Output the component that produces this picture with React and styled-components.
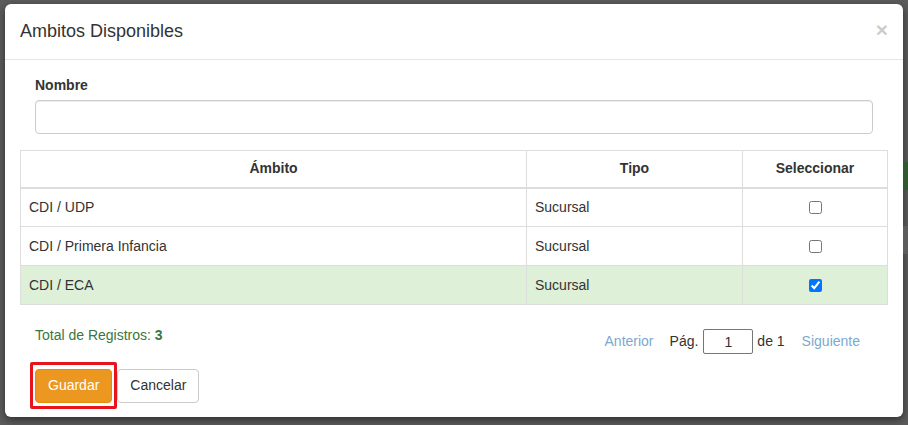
import React, { useState } from "react";
import styled, { createGlobalStyle } from "styled-components";

const GlobalStyle = createGlobalStyle`
  html, body {
    margin: 0;
    padding: 0;
    background: #5c5c5c;
    font-family: "Liberation Sans", Arial, sans-serif;
    font-size: 14px;
    line-height: 1.42857;
    color: #333;
  }
  * { box-sizing: border-box; }
`;

const Backdrop = styled.div`
  width: 908px;
  height: 425px;
  display: flex;
  align-items: flex-start;
  padding: 4px 0 0 5px;
  overflow: hidden;
`;

const PagePeek = styled.div`
  flex: 1;
  display: flex;
  flex-direction: column;
  padding-top: 158px;
`;

const PeekBar = styled.div`
  height: 28px;
  background: ${props => props.color};
  margin-bottom: ${props => props.gap}px;
`;

const Modal = styled.div`
  width: 898px;
  height: 413px;
  background: #fff;
  border-radius: 6px;
  box-shadow: 0 3px 9px rgba(0, 0, 0, 0.5);
  display: flex;
  flex-direction: column;
  flex-shrink: 0;
  overflow: hidden;
`;

const ModalHeader = styled.div`
  display: flex;
  align-items: center;
  justify-content: space-between;
  padding: 15px 15px 14px 15px;
  border-bottom: 1px solid #e5e5e5;
`;

const ModalTitle = styled.h4`
  margin: 0;
  font-size: 18px;
  font-weight: normal;
  line-height: 1.42857;
  color: #333;
`;

const CloseButton = styled.button`
  border: none;
  background: transparent;
  padding: 0;
  font-family: "Liberation Sans", Arial, sans-serif;
  font-size: 21px;
  font-weight: bold;
  line-height: 1;
  color: #000;
  opacity: 0.2;
  margin-top: -4px;
  cursor: pointer;
`;

const ModalBody = styled.div`
  padding: 15px;
`;

const FormGroup = styled.div`
  padding: 0 15px;
  margin-bottom: 16px;
  display: flex;
  flex-direction: column;
`;

const Label = styled.label`
  font-weight: bold;
  margin-bottom: 5px;
  padding-top: 1px;
`;

const TextInput = styled.input`
  height: 34px;
  border: 1px solid #ccc;
  border-radius: 4px;
  padding: 6px 12px;
  font-family: inherit;
  font-size: 14px;
  box-shadow: inset 0 1px 1px rgba(0, 0, 0, 0.075);
  outline: none;
  margin-top: -1px;
`;

const Table = styled.table`
  width: 100%;
  border-collapse: collapse;
  border: 1px solid #ddd;
  margin-bottom: 20px;
  table-layout: fixed;
`;

const Th = styled.th`
  width: ${props => props.width}px;
  padding: 8px;
  border: 1px solid #ddd;
  border-bottom: 2px solid #ddd;
  text-align: center;
  font-weight: bold;
  line-height: 1.42857;
  height: 37px;
`;

const Tr = styled.tr`
  background: ${props => (props.selected ? "#dff0d8" : "#fff")};
`;

const Td = styled.td`
  padding: 9px 8px 8px 8px;
  border: 1px solid #ddd;
  text-align: ${props => (props.center ? "center" : "left")};
  vertical-align: middle;
  height: 39px;
  color: #333;
`;

const Check = styled.input`
  display: block;
  margin: 0 auto;
  width: 13px;
  height: 13px;
`;

const FooterRow = styled.div`
  display: flex;
  align-items: flex-start;
  justify-content: space-between;
  padding: 0 28px 0 15px;
  margin-bottom: 8px;
`;

const Total = styled.div`
  color: #3c763d;
  padding-top: 1px;
`;

const Pager = styled.div`
  display: flex;
  align-items: center;
  padding-top: 4px;
`;

const PagerLink = styled.a`
  color: #337ab7;
  opacity: 0.65;
  text-decoration: none;
  margin: ${props => props.margin};
`;

const PagerText = styled.span`
  color: #333;
`;

const PageInput = styled.input`
  width: 50px;
  height: 25px;
  border: 1px solid #767676;
  border-radius: 2px;
  margin: 0 4px 0 5px;
  text-align: center;
  font-family: inherit;
  font-size: 14px;
  padding: 0;
  color: #333;
`;

const Actions = styled.div`
  display: flex;
  align-items: center;
  padding: 0 15px;
`;

const Highlight = styled.div`
  border: 3px solid #e8141b;
  border-radius: 2px;
  padding: 4px 2px 3px 2px;
  margin-left: -5px;
  display: flex;
`;

const Button = styled.button`
  height: 34px;
  padding: 6px 12px;
  font-family: "Liberation Sans", Arial, sans-serif;
  font-size: 14px;
  line-height: 1.42857;
  border-radius: 4px;
  border: 1px solid ${props => (props.primary ? "#e08e0b" : "#ccc")};
  background: ${props => (props.primary ? "#ec971f" : "#fff")};
  color: ${props => (props.primary ? "#fff" : "#333")};
  cursor: pointer;
`;

const rows = [
  { ambito: "CDI / UDP", tipo: "Sucursal", checked: false },
  { ambito: "CDI / Primera Infancia", tipo: "Sucursal", checked: false },
  { ambito: "CDI / ECA", tipo: "Sucursal", checked: true },
];

const App = () => {
  const [items, setItems] = useState(rows);
  const toggle = i =>
    setItems(items.map((r, j) => (j === i ? { ...r, checked: !r.checked } : r)));

  return (
    <>
      <GlobalStyle />
      <Backdrop>
        <Modal>
          <ModalHeader>
            <ModalTitle>Ambitos Disponibles</ModalTitle>
            <CloseButton>×</CloseButton>
          </ModalHeader>
          <ModalBody>
            <FormGroup>
              <Label htmlFor="nombre">Nombre</Label>
              <TextInput id="nombre" type="text" />
            </FormGroup>
            <Table>
              <thead>
                <tr>
                  <Th width={506}>Ámbito</Th>
                  <Th width={216}>Tipo</Th>
                  <Th width={145}>Seleccionar</Th>
                </tr>
              </thead>
              <tbody>
                {items.map((r, i) => (
                  <Tr key={r.ambito} selected={r.checked}>
                    <Td>{r.ambito}</Td>
                    <Td>{r.tipo}</Td>
                    <Td center>
                      <Check
                        type="checkbox"
                        checked={r.checked}
                        onChange={() => toggle(i)}
                      />
                    </Td>
                  </Tr>
                ))}
              </tbody>
            </Table>
            <FooterRow>
              <Total>
                Total de Registros: <b>{items.length}</b>
              </Total>
              <Pager>
                <PagerLink href="#" margin="0 16px 0 0">
                  Anterior
                </PagerLink>
                <PagerText>Pág.</PagerText>
                <PageInput type="text" defaultValue="1" />
                <PagerText>de 1</PagerText>
                <PagerLink href="#" margin="0 0 0 17px">
                  Siguiente
                </PagerLink>
              </Pager>
            </FooterRow>
            <Actions>
              <Highlight>
                <Button primary>Guardar</Button>
              </Highlight>
              <Button>Cancelar</Button>
            </Actions>
          </ModalBody>
        </Modal>
        <PagePeek>
          <PeekBar color="#2f5a2f" gap={36} />
          <PeekBar color="#5c5c5c" gap={0} />
        </PagePeek>
      </Backdrop>
    </>
  );
};

export default App;
